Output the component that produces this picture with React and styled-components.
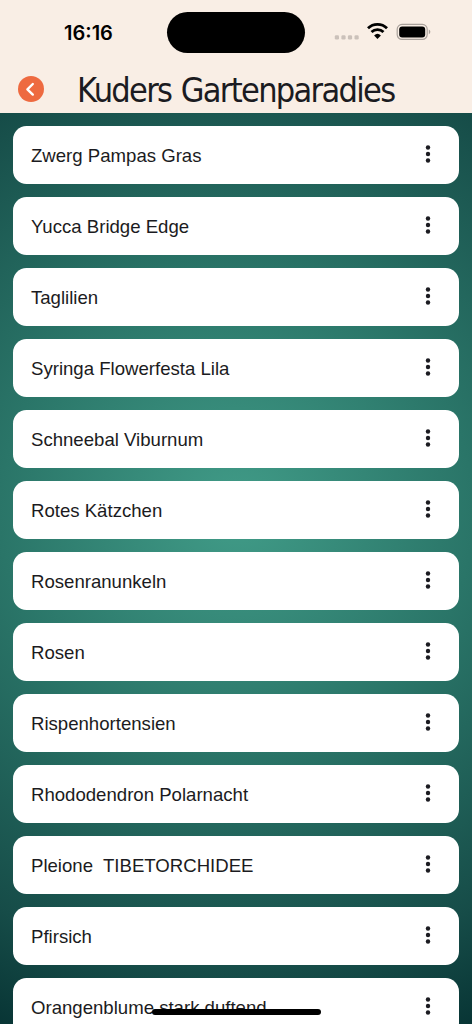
import React from 'react';
import styled, { createGlobalStyle } from 'styled-components';

const GlobalStyle = createGlobalStyle`
  * {
    box-sizing: border-box;
  }
  body {
    margin: 0;
    overflow: hidden;
  }
`

const Screen = styled.div`
  position: relative;
  display: flex;
  flex-direction: column;
  width: 472px;
  height: 1024px;
  overflow: hidden;
  color: #1b1b21;
  background: radial-gradient(circle at 50% 50%, #419c88 0%, #2a7568 42%, #164c48 82%, #083535 100%);
  font-family: "Liberation Sans", Arial, sans-serif;
`

const Top = styled.div`
  flex: none;
  height: 113px;
  background-color: #f9eee5;
`

const StatusBar = styled.div`
  display: flex;
  align-items: center;
  height: 66px;
  padding-left: 64px;
`

const Clock = styled.div`
  width: 103px;
  font-family: Inter, sans-serif;
  font-size: 20px;
  font-weight: 600;
  letter-spacing: 0;
  color: black;
`

const Island = styled.div`
  width: 138px;
  height: 41px;
  margin-top: -1px;
  border-radius: 21px;
  background-color: black;
`

const Signals = styled.svg`
  width: 100px;
  height: 24px;
  margin: -2px 0 0 29px;
`

const Header = styled.div`
  display: flex;
  align-items: center;
  height: 46px;
  padding-left: 18px;
`

const BackButton = styled.button`
  display: flex;
  width: 26px;
  height: 26px;
  padding: 0;
  border: none;
  border-radius: 50%;
  background-color: #ee6a40;
`

const Title = styled.h1`
  margin: 2px 0 0 33px;
  font-family: "DejaVu Sans Condensed", "DejaVu Sans", sans-serif;
  font-stretch: condensed;
  font-size: 34px;
  font-weight: 400;
  line-height: 40px;
  letter-spacing: -1.7px;
  word-spacing: 1.5px;
  white-space: nowrap;
`

const List = styled.div`
  display: flex;
  flex-direction: column;
  gap: 13px;
  padding: 13.4px 13.3px 0;
`

const Row = styled.div`
  display: flex;
  flex: none;
  align-items: center;
  justify-content: space-between;
  height: 58px;
  padding: 0 25px 0 17.7px;
  border-radius: 13.5px;
  background-color: white;
`

const Name = styled.span`
  margin-top: 2px;
  font-size: 18.6px;
  line-height: 24px;
  white-space: pre;
`

const Dots = styled.svg`
  width: 12px;
  height: 24px;
  margin-top: -3px;
  fill: #1b1b21;
`

const HomeIndicator = styled.div`
  position: absolute;
  bottom: 9px;
  left: 152px;
  width: 169px;
  height: 6px;
  border-radius: 3px;
  background-color: black;
`

const plants = [
  'Zwerg Pampas Gras',
  'Yucca Bridge Edge',
  'Taglilien',
  'Syringa Flowerfesta Lila',
  'Schneebal Viburnum',
  'Rotes Kätzchen',
  'Rosenranunkeln',
  'Rosen',
  'Rispenhortensien',
  'Rhododendron Polarnacht',
  'Pleione  TIBETORCHIDEE',
  'Pfirsich',
  'Orangenblume stark duftend',
]

const StatusIcons = () => (
  <Signals viewBox="0 0 100 24">
    <g fill="#cbc1ba">
      <rect x="0.8" y="15.3" width="4.2" height="4.2" rx="1.3" />
      <rect x="7.4" y="15.3" width="4.2" height="4.2" rx="1.3" />
      <rect x="13.9" y="15.3" width="4.2" height="4.2" rx="1.3" />
      <rect x="20.5" y="15.3" width="4.2" height="4.2" rx="1.3" />
    </g>
    <g fill="none" stroke="black" strokeWidth="2.8">
      <path d="M34 8.2a13.6 13.6 0 0 1 19 0" />
      <path d="M37.5 12a8.6 8.6 0 0 1 12 0" />
    </g>
    <path d="M40.1 15.4a5 5 0 0 1 6.8 0L43.5 18.9z" fill="black" />
    <rect x="63.2" y="4.4" width="30" height="15" rx="4.8" fill="none" stroke="#a9a19b" strokeWidth="1.2" />
    <rect x="65.2" y="6.4" width="26" height="11" rx="3" fill="black" />
    <path d="M94.8 9.6c2 .8 2 3.8 0 4.6z" fill="#a9a19b" />
  </Signals>
)

class App extends React.Component {
  renderPlant = (plant) => (
    <Row key={plant}>
      <Name>{plant}</Name>
      <Dots viewBox="0 0 12 24">
        <circle cx="6" cy="5.5" r="2.2" />
        <circle cx="6" cy="12" r="2.2" />
        <circle cx="6" cy="18.5" r="2.2" />
      </Dots>
    </Row>
  )

  render() {
    return (
      <Screen>
        <GlobalStyle />
        <Top>
          <StatusBar>
            <Clock>16:16</Clock>
            <Island />
            <StatusIcons />
          </StatusBar>
          <Header>
            <BackButton aria-label="Zurück">
              <svg width="26" height="26" viewBox="0 0 26 26" fill="none" stroke="white" strokeWidth="2.4" strokeLinecap="round" strokeLinejoin="round">
                <path d="M14.8 8L9.4 13.3L14.8 18.6" />
              </svg>
            </BackButton>
            <Title>Kuders Gartenparadies</Title>
          </Header>
        </Top>
        <List>{plants.map(this.renderPlant)}</List>
        <HomeIndicator />
      </Screen>
    );
  }
}

export default App;
